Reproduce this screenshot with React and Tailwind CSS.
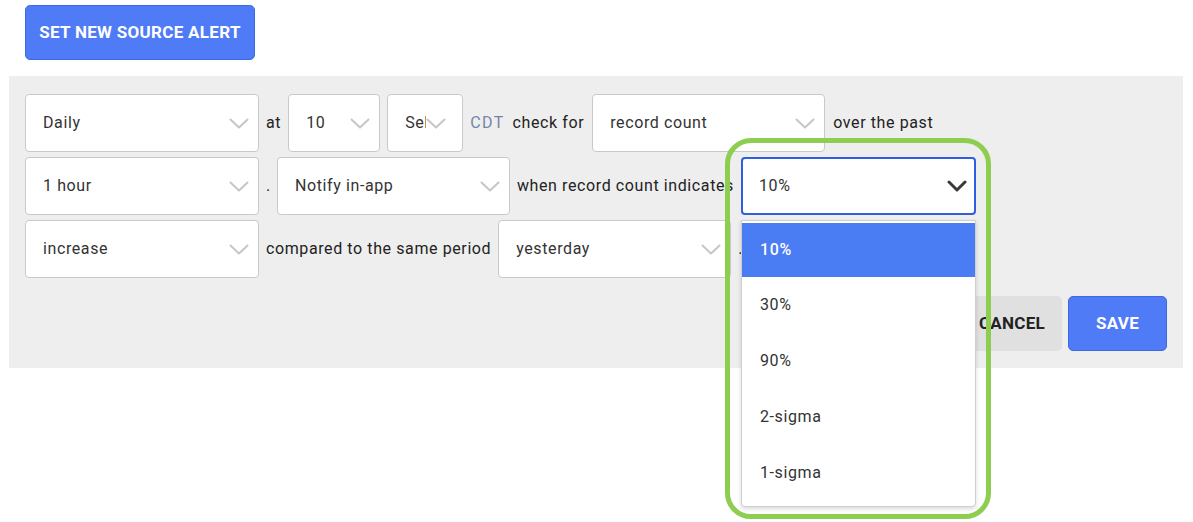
import React from "react";

const Chevron = ({ dark }) =>
  dark ? (
    <svg width="20" height="12" viewBox="0 0 20 12" className="shrink-0">
      <polyline points="2,2 10,10 18,2" fill="none" stroke="#3a3a3a" strokeWidth="3" strokeLinecap="round" strokeLinejoin="round" />
    </svg>
  ) : (
    <svg width="20" height="11" viewBox="0 0 20 11" className="shrink-0">
      <polyline points="1.5,1.5 10,9.5 18.5,1.5" fill="none" stroke="#c6c6c6" strokeWidth="2" strokeLinecap="round" strokeLinejoin="round" />
    </svg>
  );

const Select = ({ value, w, open, pr }) => (
  <div
    className={
      "h-[58px] flex items-center bg-white rounded-[4px] shrink-0 " +
      (open ? "border-2 border-[#2f5fe0] pl-[16px] pr-[7px]" : "border border-[#c9c9c9] pl-[17px] " + (pr || "pr-[9px]"))
    }
    style={{ width: w }}
  >
    <span className="flex-1 overflow-hidden whitespace-nowrap text-[16px] tracking-[0.6px] text-[#333]">{value}</span>
    <Chevron dark={open} />
  </div>
);

const Label = ({ children, cls = "" }) => (
  <span className={"text-[16px] tracking-[0.6px] text-[#222] whitespace-nowrap shrink-0 " + cls}>{children}</span>
);

export default function App() {
  return (
    <div className="w-[1193px] h-[522px] bg-white relative overflow-hidden" style={{ fontFamily: "Roboto, 'Liberation Sans', sans-serif" }}>
      <div className="pt-[5px] pl-[25px]">
        <button className="w-[230px] h-[55px] rounded-[5px] bg-[#4f7bf7] border border-[#3e69e6] text-white font-bold text-[17px] tracking-[0.3px]">
          SET NEW SOURCE ALERT
        </button>
      </div>
      <div className="ml-[9px] mt-[16px] w-[1174px] h-[292px] bg-[#eeeeee] pt-[18px] pl-[16px] pr-[16px] flex flex-col">
        <div className="flex flex-col gap-[5px]">
          <div className="flex items-center gap-[7px]">
            <Select value="Daily" w={234} />
            <Label>at</Label>
            <Select value="10" w={92} />
            <Select value="Select" w={76} pr="pr-[16px]" />
            <span className="text-[16px] tracking-[1.4px] text-[#7286a8] mr-[1px]">CDT</span>
            <Label cls="mr-[1px]">check for</Label>
            <Select value="record count" w={233} />
            <Label cls="ml-[1px]">over the past</Label>
          </div>
          <div className="flex items-center gap-[7px]">
            <Select value="1 hour" w={234} />
            <Label cls="w-[4px]">.</Label>
            <Select value="Notify in-app" w={233} />
            <Label cls="w-[217px] overflow-hidden">when record count indicates</Label>
            <Select value="10%" w={235} open />
          </div>
          <div className="flex items-center gap-[7px]">
            <Select value="increase" w={234} />
            <Label>compared to the same period</Label>
            <Select value="yesterday" w={233} />
            <Label>.</Label>
          </div>
        </div>
        <div className="mt-[18px] flex justify-end gap-[6px]">
          <button className="w-[100px] h-[55px] rounded-[5px] bg-[#e0e0e0] text-[#222] font-bold text-[17px] tracking-[0.3px]">CANCEL</button>
          <button className="w-[99px] h-[55px] rounded-[5px] bg-[#4f7bf7] border border-[#3e69e6] text-white font-bold text-[17px] tracking-[0.3px]">SAVE</button>
        </div>
      </div>

      {/* dropdown menu overlay */}
      <div className="absolute left-[741px] top-[220px] w-[235px] h-[287px] bg-white border border-[#cfcfcf] rounded-b-[4px] shadow-[0_2px_4px_rgba(0,0,0,0.15)] pt-[2px]">
        <div className="h-[54px] bg-[#4a7cf3] flex items-center pl-[18px] text-white text-[16px] tracking-[0.6px] font-medium">10%</div>
        {["30%", "90%", "2-sigma", "1-sigma"].map((o) => (
          <div key={o} className="h-[56px] flex items-center pl-[18px] text-[16px] tracking-[0.6px] text-[#333]">{o}</div>
        ))}
      </div>

      {/* green highlight */}
      <div className="absolute left-[725px] top-[138px] w-[266px] h-[381px] border-[5px] border-[#8dcd4f] rounded-[26px] pointer-events-none" />
    </div>
  );
}
